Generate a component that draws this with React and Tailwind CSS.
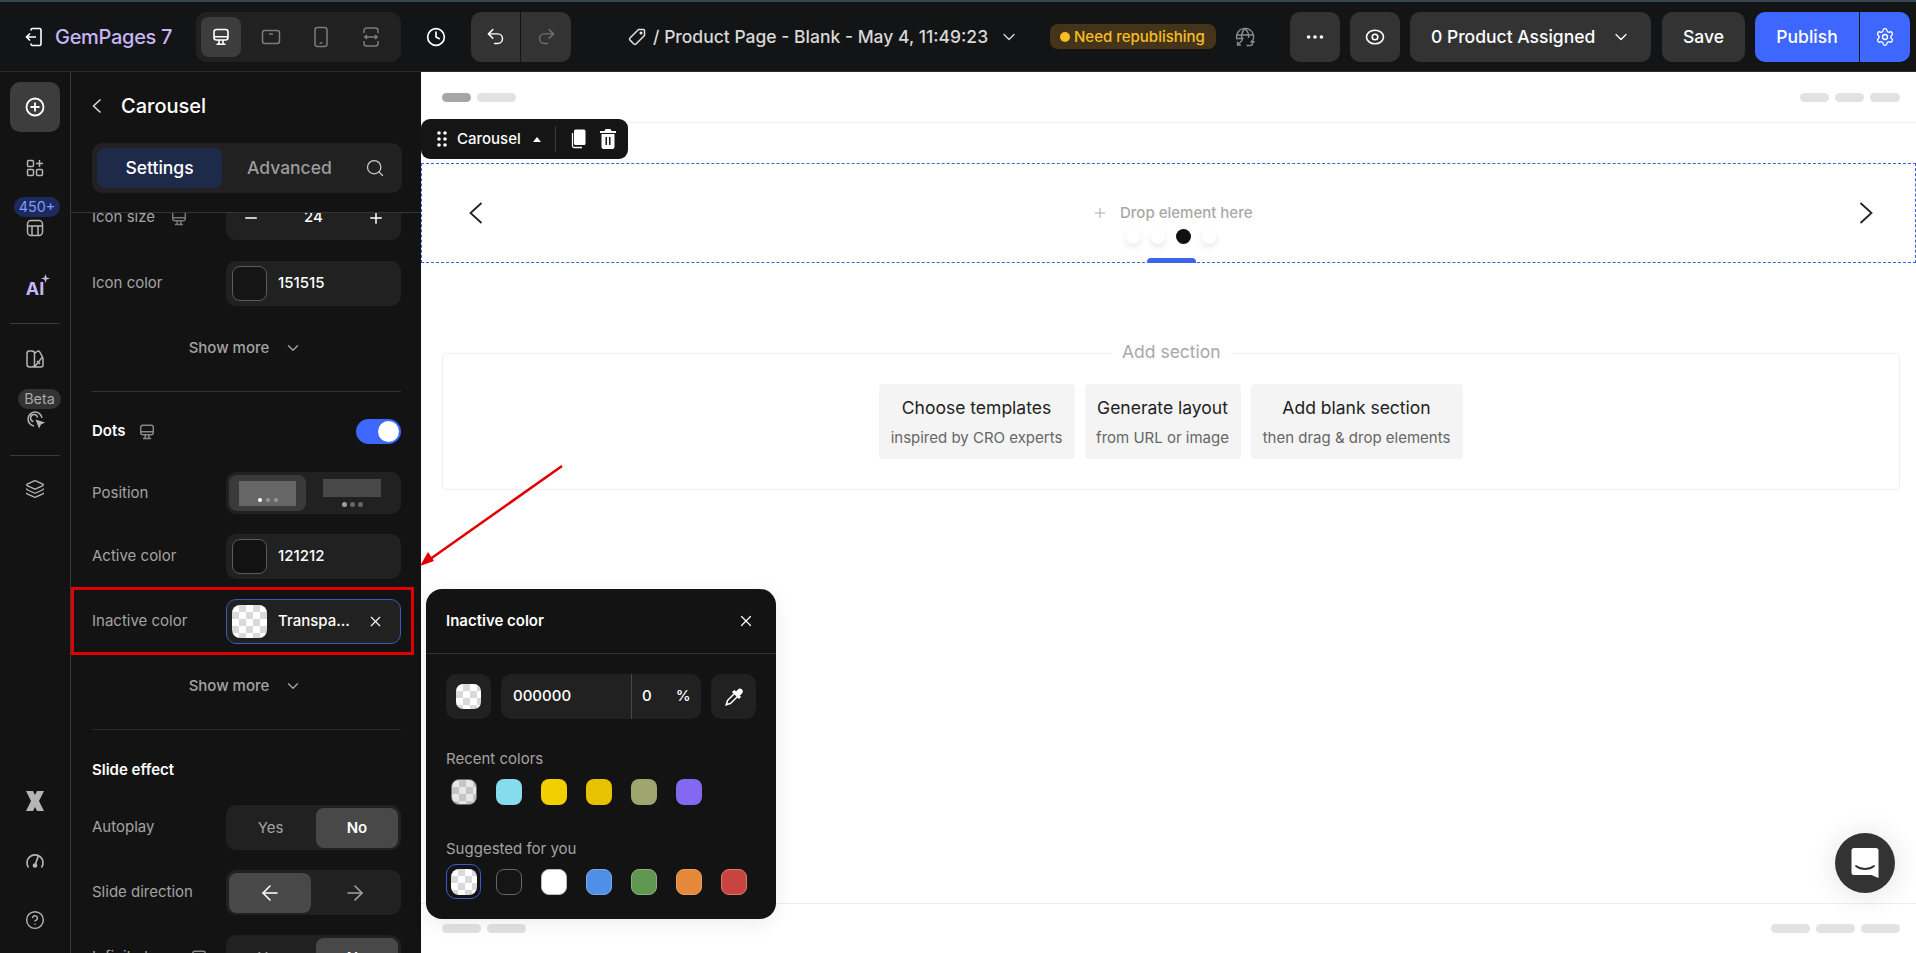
import { ChevronDown, Clock, Undo2, Redo2, MoreHorizontal, Settings, Search, Plus, Minus, X, Layers, CircleHelp, ArrowLeft, ArrowRight } from 'lucide-react'

const recentColors = ['bg-[#86dcec]', 'bg-[#f2cf00]', 'bg-[#e6c200]', 'bg-[#9ea56e]', 'bg-[#8468f0]']
const suggestedColors = [
  'bg-[#151515] border border-[#666]',
  'bg-white border border-[#bbb]',
  'bg-[#4f8fe8] border border-[#7aa8ea]',
  'bg-[#5f9650] border border-[#8ab080]',
  'bg-[#e5883a] border border-[#e8a060]',
  'bg-[#c9433f] border border-[#d87a78]',
]

function Checker({ className = '' }) {
  return (
    <div className={`bg-[repeating-conic-gradient(#d9d9d9_0_25%,#ffffff_0_50%)] bg-[length:14px_14px] ${className}`} />
  )
}

function MonitorIcon({ size = 20, className = '' }) {
  return (
    <svg width={size} height={size} viewBox="0 0 20 20" fill="none" stroke="currentColor" strokeWidth="1.6" className={className}>
      <rect x="3" y="2.5" width="14" height="10.5" rx="2.5" />
      <path d="M3 9.8h14M8 13v4M12 13v4M5.5 17.2h9" />
    </svg>
  )
}

function Chevron({ dir }) {
  return (
    <svg width="14" height="22" viewBox="0 0 14 22" fill="none" stroke="#222" strokeWidth="1.8">
      <path d={dir === 'left' ? 'M12.500 1 1.500 11l11 10' : 'M1.500 1l11 10-11 10'} />
    </svg>
  )
}

function Row({ label, icon, children, className = '', height = 'h-[45px]' }) {
  return (
    <div className={`flex items-center justify-between ${height} ${className}`}>
      <div className="flex items-center gap-[15px] text-[15px] text-[#a3a3a3]">
        {label}
        {icon}
      </div>
      {children}
    </div>
  )
}

function ColorField({ swatch, value }) {
  return (
    <div className="w-[175px] h-[45px] rounded-[10px] bg-[#212121] flex items-center px-[6px]">
      <div className={`w-[35px] h-[35px] rounded-[8px] border border-[#5c5c5c] ${swatch}`} />
      <span className="ml-[11px] text-[15px] font-medium text-white">{value}</span>
    </div>
  )
}

function ShowMore({ className = '' }) {
  return (
    <div className={`h-[40px] flex items-center justify-center gap-[15px] pr-[2px] text-[15px] font-medium text-[#a3a3a3] ${className}`}>
      Show more
      <ChevronDown size={18} strokeWidth={1.8} />
    </div>
  )
}

function Segment({ left, right, active, leftClass }) {
  const on = 'bg-[#484848] text-white font-semibold'
  const off = 'text-[#a3a3a3]'
  return (
    <div className="w-[175px] h-[45px] rounded-[10px] bg-[#212121] flex p-[3px] text-[15px]">
      <div className={`${leftClass} shrink-0 h-[40px] rounded-[8px] flex items-center justify-center ${active === 'left' ? on : off}`}>{left}</div>
      <div className={`flex-1 h-[40px] rounded-[8px] flex items-center justify-center ${active === 'right' ? on : off}`}>{right}</div>
    </div>
  )
}

function TopBar() {
  return (
    <header className="h-[72px] shrink-0 flex items-center border-t-2 border-t-[#3a4552] border-b border-b-[#2a2a2a] bg-[#131415] text-white">
      <svg width="18" height="20" viewBox="0 0 18 20" fill="none" stroke="currentColor" strokeWidth="1.6" className="ml-[25px]">
        <path d="M6 3.5V3a1.5 1.5 0 0 1 1.5-1.5h7A1.5 1.5 0 0 1 16 3v14a1.5 1.5 0 0 1-1.5 1.5h-7A1.5 1.5 0 0 1 6 17v-.5M11 10H2M5 6.5 1.5 10 5 13.500" />
      </svg>
      <span className="ml-[12px] text-[20px] font-medium tracking-[-0.3px] text-[#c7b6f5] w-[120px] whitespace-nowrap">GemPages 7</span>
      <div className="ml-[21px] w-[205px] h-[50px] rounded-[10px] bg-[#212121] flex items-center px-[5px] gap-[10px] text-[#7c7c7c]">
        <div className="w-[40px] h-[40px] rounded-[8px] bg-[#3d3d3d] flex items-center justify-center text-white"><MonitorIcon /></div>
        <div className="w-[40px] flex justify-center">
          <svg width="20" height="20" viewBox="0 0 20 20" fill="none" stroke="currentColor" strokeWidth="1.5"><rect x="1.500" y="3.500" width="17" height="13" rx="2.500" /><path d="M8 7h4" /></svg>
        </div>
        <div className="w-[40px] flex justify-center">
          <svg width="20" height="22" viewBox="0 0 20 22" fill="none" stroke="currentColor" strokeWidth="1.5"><rect x="4" y="1.500" width="12" height="19" rx="2.500" /><path d="M8.500 17h3" /></svg>
        </div>
        <div className="w-[40px] flex justify-center">
          <svg width="20" height="22" viewBox="0 0 20 22" fill="none" stroke="currentColor" strokeWidth="1.5"><path d="M3 7V4.500a2.500 2.500 0 0 1 2.500-2.500h9A2.500 2.500 0 0 1 17 4.500V7M3 15v2.500A2.500 2.500 0 0 0 5.500 20h9a2.500 2.500 0 0 0 2.500-2.500V15M3 11h14M6 9l-2 2 2 2M14 9l2 2-2 2" /></svg>
        </div>
      </div>
      <Clock size={20} strokeWidth={2} className="ml-[25px]" />
      <div className="ml-[25px] w-[100px] h-[50px] rounded-[10px] bg-[#333] flex">
        <div className="w-[50px] flex items-center justify-center border-r border-r-[#131415]"><Undo2 size={21} strokeWidth={1.7} /></div>
        <div className="w-[50px] flex items-center justify-center text-[#6f6f6f]"><Redo2 size={21} strokeWidth={1.7} /></div>
      </div>
      <svg width="20" height="20" viewBox="0 0 20 20" fill="none" stroke="#e0e0e0" strokeWidth="1.5" className="ml-[56px]">
        <path d="M11.500 2.500h5a1 1 0 0 1 1 1v5L9 17a1.500 1.500 0 0 1-2.100 0l-3.900-3.900a1.500 1.500 0 0 1 0-2.100z" />
        <circle cx="14" cy="6" r="0.800" />
      </svg>
      <span className="ml-[6px] pt-px w-[335px] whitespace-nowrap text-[17.500px] font-medium text-[#d8d8d8]">/ Product Page - Blank - May 4, 11:49:23</span>
      <ChevronDown size={20} strokeWidth={1.5} className="ml-[11px] text-[#d8d8d8]" />
      <div className="ml-[31px] w-[166px] h-[25px] rounded-[8px] bg-[#44351a] flex items-center pl-[10px] pt-px gap-[4px] text-[15px] font-medium text-[#f8bd25] whitespace-nowrap">
        <span className="w-[10px] h-[10px] rounded-full bg-[#f8bd25]" />
        Need republishing
      </div>
      <svg width="20" height="20" viewBox="0 0 20 20" fill="none" stroke="#8a8a8a" strokeWidth="1.400" className="ml-[19px]">
        <path d="M2 12.500A8.500 8.500 0 1 1 18 13M1.800 8h16.400M2.500 11.500h6M10 1.500c-4 4-4 8-2.500 12M10 1.500c3 3 4 6.500 3.500 9.500" />
        <path d="M7 13.500 2.500 18M2.500 14.500V18H6M11.500 18.500h4a2 2 0 0 0 2-2v-3M15.500 15.500l2-2 2 2" />
      </svg>
      <div className="ml-auto mr-[6px] flex items-center gap-[10px]">
        <div className="w-[50px] h-[50px] rounded-[10px] bg-[#333] flex items-center justify-center"><MoreHorizontal size={22} /></div>
        <div className="w-[50px] h-[50px] rounded-[10px] bg-[#333] flex items-center justify-center">
          <svg width="20" height="16" viewBox="0 0 20 16" fill="none" stroke="currentColor" strokeWidth="1.600"><ellipse cx="10" cy="8" rx="8.500" ry="6.800" /><circle cx="10" cy="8" r="2.800" /></svg>
        </div>
        <div className="w-[241px] h-[50px] rounded-[10px] bg-[#333] flex items-center pl-[21px] gap-[16px] text-[17.500px] font-medium whitespace-nowrap">
          <span className="pt-px">0 Product Assigned</span>
          <ChevronDown size={20} strokeWidth={1.500} />
        </div>
        <div className="w-[83px] h-[50px] ml-[1px] pt-px rounded-[10px] bg-[#333] flex items-center justify-center text-[17.500px] font-medium">Save</div>
        <div className="w-[155px] h-[50px] rounded-[10px] bg-[#3d67ff] flex">
          <div className="w-[105px] pt-px flex items-center justify-center border-r border-r-[#131415] text-[17.500px] font-medium">Publish</div>
          <div className="flex-1 flex items-center justify-center"><Settings size={20} strokeWidth={1.600} /></div>
        </div>
      </div>
    </header>
  )
}

function Rail() {
  return (
    <aside className="w-[71px] shrink-0 border-r border-r-[#3a3a3a] bg-[#131313] flex flex-col items-center text-[#b5b5b5]">
      <div className="mt-[10px] w-[50px] h-[50px] rounded-[10px] bg-[#3d3d3d] flex items-center justify-center text-white">
        <svg width="20" height="20" viewBox="0 0 20 20" fill="none" stroke="currentColor" strokeWidth="1.8"><circle cx="10" cy="10" r="8.500" /><path d="M10 5.500v9M5.500 10h9" /></svg>
      </div>
      <svg width="18" height="18" viewBox="0 0 18 18" fill="none" stroke="currentColor" strokeWidth="1.500" className="mt-[27px]">
        <rect x="1.500" y="1.500" width="6" height="6" rx="1.200" /><rect x="1.500" y="10.500" width="6" height="6" rx="1.200" /><rect x="10.500" y="10.500" width="6" height="6" rx="1.200" /><path d="M13.500 1v7M10 4.500h7" />
      </svg>
      <div className="mt-[20px] px-[5px] h-[20px] rounded-[10px] bg-[#1d2b5c] flex items-center text-[14.400px] text-[#7f9bff] ml-[4px]">450+</div>
      <svg width="18" height="18" viewBox="0 0 18 18" fill="none" stroke="currentColor" strokeWidth="1.500" className="mt-[2px]">
        <rect x="1.500" y="1.500" width="15" height="15" rx="3.500" /><path d="M1.500 7h15M6 7v9.500M12 7v9.500" />
      </svg>
      <div className="relative mt-[39px] h-[24px] flex items-center text-[18px] font-bold text-[#c7b6f5]">
        AI
        <svg width="9" height="9" viewBox="0 0 10 10" fill="currentColor" className="absolute -right-[6px] -top-[2px]"><path d="M5 0l1.200 3.800L10 5 6.200 6.200 5 10 3.800 6.200 0 5l3.800-1.200z" /></svg>
      </div>
      <div className="mt-[23px] w-[50px] h-px bg-[#3a3a3a]" />
      <svg width="18" height="18" viewBox="0 0 18 18" fill="none" stroke="currentColor" strokeWidth="1.500" className="mt-[26px]">
        <rect x="1" y="1" width="7.500" height="16" rx="2.500" /><path d="M8.500 3.500 11 1.500c1-.7 2-.5 2.700.4L16.500 7 8.500 17h6.500a2 2 0 0 0 2-2V8.500H16.500M4.500 13h.1M11 11l3 3" />
      </svg>
      <div className="mt-[21px] px-[6px] h-[20px] rounded-[10px] bg-[#333] flex items-center text-[14.400px] text-[#a8a8a8] ml-[9px]">Beta</div>
      <svg width="20" height="20" viewBox="0 0 20 20" fill="none" stroke="currentColor" strokeWidth="1.500" className="mt-[1px] ml-[1px]">
        <path d="M16 8a7 7 0 1 0-8 8" /><path d="M11.500 7.500A3.500 3.500 0 1 0 7.500 11.500" />
        <path d="M9.500 9.500 19 12.500l-4 2-2 4z" fill="currentColor" stroke="none" />
      </svg>
      <div className="mt-[25px] w-[50px] h-px bg-[#3a3a3a]" />
      <Layers size={20} strokeWidth={1.600} className="mt-[23px]" />
      <svg width="18" height="20" viewBox="0 0 18 20" fill="currentColor" className="mt-auto">
        <path d="M0 0h7l2 4 2-4h7l-5 10 5 10h-7l-2-4-2 4H0l5-10z" />
      </svg>
      <svg width="20" height="20" viewBox="0 0 20 20" fill="none" stroke="currentColor" strokeWidth="1.700" className="mt-[40px]">
        <path d="M3.500 16.500a8 8 0 1 1 13 0M13.500 4.500 10.500 13" /><circle cx="10" cy="14.500" r="1.500" fill="currentColor" />
      </svg>
      <CircleHelp size={20} strokeWidth={1.700} className="mt-[39px] mb-[23px]" />
    </aside>
  )
}

function SettingsPanel() {
  return (
    <section className="w-[350px] shrink-0 bg-[#131313] text-white flex flex-col overflow-hidden">
      <div className="relative z-10 h-[141px] shrink-0 bg-[#131313] border-b border-b-[#333] px-[21px]">
        <div className="flex items-center h-[50px] mt-[9px]">
          <svg width="10" height="16" viewBox="0 0 10 16" fill="none" stroke="#ddd" strokeWidth="1.500"><path d="M8.500 1.500 1.500 8l7 6.500" /></svg>
          <span className="ml-[19px] text-[20px] font-medium">Carousel</span>
        </div>
        <div className="mt-[12px] w-[310px] h-[50px] rounded-[10px] bg-[#212121] flex items-center pl-[5px] text-[17.500px] font-medium">
          <div className="w-[125px] h-[40px] rounded-[8px] bg-[#1e2a4a] flex items-center justify-center">Settings</div>
          <span className="ml-[25px] text-[#9c9c9c]">Advanced</span>
          <Search size={20} strokeWidth={1.500} className="ml-[33px] text-[#ccc]" />
        </div>
      </div>
      <div className="-mt-[18px] pl-[21px] pr-[20px]">
        <Row label="Icon size" icon={<MonitorIcon size={18} className="text-[#777]" />}>
          <div className="w-[175px] h-[45px] rounded-[10px] bg-[#212121] flex items-center justify-between px-[16px] text-[15px] font-medium">
            <Minus size={18} /><span>24</span><Plus size={18} />
          </div>
        </Row>
        <Row label="Icon color" className="mt-[21px]"><ColorField swatch="bg-[#151515]" value="151515" /></Row>
        <ShowMore className="mt-[22px]" />
        <div className="mt-[23px] h-px bg-[#333]" />
        <div className="mt-[27px] h-[25px] flex items-center justify-between">
          <div className="flex items-center gap-[13px] text-[15px] font-semibold">Dots<MonitorIcon size={18} className="text-[#888]" /></div>
          <div className="w-[45px] h-[25px] rounded-full bg-[#3d67ff] flex items-center justify-end pr-[2px]"><div className="w-[21px] h-[21px] rounded-full bg-white" /></div>
        </div>
        <Row label="Position" className="mt-[28px]" height="h-[42px]">
          <div className="w-[175px] h-[42px] rounded-[10px] bg-[#212121] flex p-[3px]">
            <div className="w-[77px] h-[36px] rounded-[8px] bg-[#3a3a3a] flex items-center justify-center">
              <div className="w-[57px] h-[25px] bg-[#666] flex items-end justify-center gap-[4px] pb-[4px]">
                <i className="w-[4px] h-[4px] rounded-full bg-white" /><i className="w-[4px] h-[4px] rounded-full bg-[#999]" /><i className="w-[4px] h-[4px] rounded-full bg-[#999]" />
              </div>
            </div>
            <div className="flex-1 flex flex-col items-center">
              <div className="w-[58px] h-[18px] mt-[4px] bg-[#484848]" />
              <div className="flex gap-[3px] mt-[5px]">
                <i className="w-[5px] h-[5px] rounded-full bg-[#a0a0a0]" /><i className="w-[5px] h-[5px] rounded-full bg-[#666]" /><i className="w-[5px] h-[5px] rounded-full bg-[#666]" />
              </div>
            </div>
          </div>
        </Row>
        <Row label="Active color" className="mt-[20px]"><ColorField swatch="bg-[#121212]" value="121212" /></Row>
        <Row label="Inactive color" className="mt-[20px]">
          <div className="w-[175px] h-[45px] rounded-[10px] bg-[#212121] border border-[#3a5bbd] flex items-center pl-[5px] pr-[16px]">
            <Checker className="w-[35px] h-[33px] rounded-[8px]" />
            <span className="ml-[11px] text-[15px] font-medium">Transpa...</span>
            <X size={17} strokeWidth={1.600} className="ml-auto" />
          </div>
        </Row>
        <ShowMore className="mt-[22px]" />
        <div className="mt-[23px] h-px bg-[#2a2a2a]" />
        <div className="mt-[28px] h-[24px] flex items-center text-[15px] font-semibold">Slide effect</div>
        <Row label="Autoplay" className="mt-[23px]"><Segment left="Yes" right="No" active="right" leftClass="w-[83px] mr-[4px]" /></Row>
        <Row label="Slide direction" className="mt-[20px]">
          <Segment left={<ArrowLeft size={24} strokeWidth={1.600} />} right={<ArrowRight size={24} strokeWidth={1.600} />} active="left" leftClass="w-[82px]" />
        </Row>
        <Row label="Infinite loop" icon={<MonitorIcon size={18} className="text-[#888]" />} className="mt-[20px]"><Segment left="Yes" right="No" active="right" leftClass="w-[83px] mr-[4px]" /></Row>
      </div>
    </section>
  )
}

function Pills({ sizes }) {
  return (
    <div className="flex gap-[6px]">
      {sizes.map((c, i) => <div key={i} className={`h-[9px] rounded-full ${c}`} />)}
    </div>
  )
}

function Canvas() {
  return (
    <main className="relative flex-1 bg-white flex flex-col overflow-hidden">
      <div className="h-[51px] shrink-0 border-b border-b-[#f1f1f1] flex items-start justify-between pt-[21px] pl-[21px] pr-[16px]">
        <Pills sizes={['w-[29px] bg-[#a6a6a6]', 'w-[39px] bg-[#e2e2e2]']} />
        <Pills sizes={['w-[29px] bg-[#e2e2e2]', 'w-[29px] bg-[#e2e2e2]', 'w-[30px] bg-[#e2e2e2]']} />
      </div>
      <div className="absolute left-0 top-[47px] w-[207px] h-[40px] rounded-[9px] bg-[#151515] flex items-center pl-[15px] text-white">
        <svg width="12" height="18" viewBox="0 0 12 18" fill="currentColor"><circle cx="3" cy="3" r="1.800" /><circle cx="9" cy="3" r="1.800" /><circle cx="3" cy="9" r="1.800" /><circle cx="9" cy="9" r="1.800" /><circle cx="3" cy="15" r="1.800" /><circle cx="9" cy="15" r="1.800" /></svg>
        <span className="ml-[9px] text-[15px] font-medium">Carousel</span>
        <span className="ml-[12px] w-0 h-0 border-x-[4px] border-x-transparent border-b-[5px] border-b-white" />
        <span className="ml-[14px] w-px h-[26px] bg-[#3a3a3a]" />
        <svg width="16" height="20" viewBox="0 0 16 20" fill="white" className="ml-[14px]"><rect x="4" y="0.500" width="11.500" height="15.500" rx="1.500" /><path d="M2.500 4v13a1.500 1.500 0 0 0 1.500 1.500h8" fill="none" stroke="white" strokeWidth="1.300" /></svg>
        <svg width="16" height="20" viewBox="0 0 16 20" fill="white" className="ml-[14px]"><path d="M5.500 0h5l1 2H16v2H0V2h4.500zM1.500 5h13v13a2 2 0 0 1-2 2h-9a2 2 0 0 1-2-2zM5.500 8v8h1.500V8zM9 8v8h1.500V8z" /></svg>
      </div>
      <div className="relative mt-[40px] h-[100px] shrink-0 border border-dashed border-[#3c64d8] flex items-center justify-between pl-[47px] pr-[42px]">
        <Chevron dir="left" />
        <div className="absolute left-[670px] top-[38px] flex items-center gap-[12px] text-[15px] font-medium text-[#a8a8a8]">
          <Plus size={16} strokeWidth={1.500} />
          Drop element here
        </div>
        <div className="absolute left-[704px] top-[65px] flex items-center gap-[11px]">
          <i className="w-[14px] h-[14px] rounded-full bg-white shadow-[0_3px_6px_rgba(0,0,0,0.1)]" />
          <i className="w-[14px] h-[14px] rounded-full bg-white shadow-[0_3px_6px_rgba(0,0,0,0.1)]" />
          <i className="w-[15px] h-[15px] rounded-full bg-[#111]" />
          <i className="w-[14px] h-[14px] rounded-full bg-white shadow-[0_3px_6px_rgba(0,0,0,0.1)]" />
        </div>
        <div className="absolute left-[725px] bottom-[-1px] w-[49px] h-[5px] rounded-t-[4px] bg-[#3c64e8]" />
        <Chevron dir="right" />
      </div>
      <div className="relative mt-[90px] ml-[21px] mr-[16px] h-[137px] shrink-0 border border-[#f0f0f0] rounded-[4px] flex justify-center pt-[30px] pr-[1px] gap-[10px]">
        <span className="absolute left-[669px] -top-[15px] px-[10px] bg-white text-[17.500px] text-[#a8a8a8]">Add section</span>
        {[
          ['Choose templates', 'inspired by CRO experts', 'w-[196px]'],
          ['Generate layout', 'from URL or image', 'w-[156px]'],
          ['Add blank section', 'then drag & drop elements', 'w-[212px]'],
        ].map(([t, s, w]) => (
          <div key={t} className={`${w} h-[75px] rounded-[4px] bg-[#f4f4f4] flex flex-col items-center whitespace-nowrap`}>
            <span className="mt-[11px] text-[17.500px] text-[#222]">{t}</span>
            <span className="mt-[6px] text-[15px] text-[#666]">{s}</span>
          </div>
        ))}
      </div>
      <div className="mt-auto h-[50px] shrink-0 border-t border-t-[#eeeeee] flex items-start justify-between pt-[20px] pl-[21px] pr-[16px]">
        <Pills sizes={['w-[39px] bg-[#e2e2e2]', 'w-[39px] bg-[#e2e2e2]']} />
        <Pills sizes={['w-[39px] bg-[#e2e2e2]', 'w-[39px] bg-[#e2e2e2]', 'w-[39px] bg-[#e2e2e2]']} />
      </div>
      <div className="absolute right-[21px] bottom-[60px] w-[60px] h-[60px] rounded-full bg-[#333] flex items-center justify-center shadow-[0_2px_30px_rgba(0,0,0,0.12)]">
        <svg width="28" height="32" viewBox="0 0 28 32" fill="white">
          <path d="M3 1h22a2.500 2.500 0 0 1 2.500 2.500V31l-7-3H3A2.500 2.500 0 0 1 .5 25.500v-22A2.500 2.500 0 0 1 3 1z" />
          <path d="M5 19c5 4 13 4 18 0" fill="none" stroke="#333" strokeWidth="1.800" strokeLinecap="round" />
        </svg>
      </div>
    </main>
  )
}

function ColorPopover() {
  return (
    <div className="absolute left-[426px] top-[589px] z-20 w-[350px] h-[330px] rounded-[16px] bg-[#131313] text-white shadow-[0_4px_20px_rgba(0,0,0,0.08)]">
      <div className="h-[65px] border-b border-b-[#333] flex items-center justify-between pl-[20px] pr-[21px]">
        <span className="text-[15px] font-semibold">Inactive color</span>
        <X size={18} strokeWidth={1.600} />
      </div>
      <div className="mt-[20px] mx-[20px] flex gap-[10px]">
        <div className="w-[45px] h-[45px] rounded-[10px] bg-[#212121] flex items-center justify-center">
          <Checker className="w-[25px] h-[25px] rounded-[7px]" />
        </div>
        <div className="w-[200px] h-[45px] rounded-[10px] bg-[#212121] flex items-center text-[15px] font-medium">
          <span className="w-[131px] h-full flex items-center pl-[12px] border-r border-r-[#484848]">000000</span>
          <span className="ml-[10px]">0</span>
          <span className="ml-[24px]">%</span>
        </div>
        <div className="w-[45px] h-[45px] rounded-[10px] bg-[#212121] flex items-center justify-center">
          <svg width="18" height="18" viewBox="0 0 18 18" fill="none" stroke="white" strokeWidth="1.500">
            <path d="M9.500 5.500 3 12c-.8.800-1 1.700-1 2.500L1.200 16.800 3.500 16c.8 0 1.700-.2 2.500-1l6.500-6.500" />
            <path d="M8 4l6 6 1-1-1-1.500 2.500-2.500a2 2 0 0 0-3-3L11 4.500 9.500 3z" fill="white" />
          </svg>
        </div>
      </div>
      <div className="mt-[28px] ml-[20px] h-[24px] flex items-center text-[15px] text-[#a3a3a3]">Recent colors</div>
      <div className="mt-[8px] ml-[25px] flex gap-[19px]">
        <Checker className="w-[26px] h-[26px] rounded-[8px] border border-[#777] opacity-90" />
        {recentColors.map((c) => <div key={c} className={`w-[26px] h-[26px] rounded-[8px] ${c}`} />)}
      </div>
      <div className="mt-[32px] ml-[20px] h-[24px] flex items-center text-[15px] text-[#a3a3a3]">Suggested for you</div>
      <div className="mt-[3px] ml-[20px] flex items-center">
        <div className="w-[35px] h-[35px] rounded-[10px] border border-[#3a5bd0] flex items-center justify-center">
          <Checker className="w-[26px] h-[26px] rounded-[8px]" />
        </div>
        <div className="ml-[15px] flex gap-[19px]">
          {suggestedColors.map((c) => <div key={c} className={`w-[26px] h-[26px] rounded-[8px] ${c}`} />)}
        </div>
      </div>
    </div>
  )
}

export default function App() {
  return (
    <div className="relative h-screen flex flex-col overflow-hidden font-[Inter,sans-serif]">
      <TopBar />
      <div className="flex-1 min-h-0 flex">
        <Rail />
        <SettingsPanel />
        <Canvas />
      </div>
      <ColorPopover />
      {/* annotation drawn on top of the screenshot */}
      <div className="absolute left-[71px] top-[587px] w-[343px] h-[68px] border-[3px] border-[#e00000] z-10" />
      <svg width="160" height="115" viewBox="0 0 160 115" className="absolute left-[414px] top-[460px] z-10">
        <path d="M148 6 12 102" stroke="#e00000" strokeWidth="2.500" />
        <path d="M6 106 20 101 14 92z" fill="#e00000" />
      </svg>
    </div>
  )
}
